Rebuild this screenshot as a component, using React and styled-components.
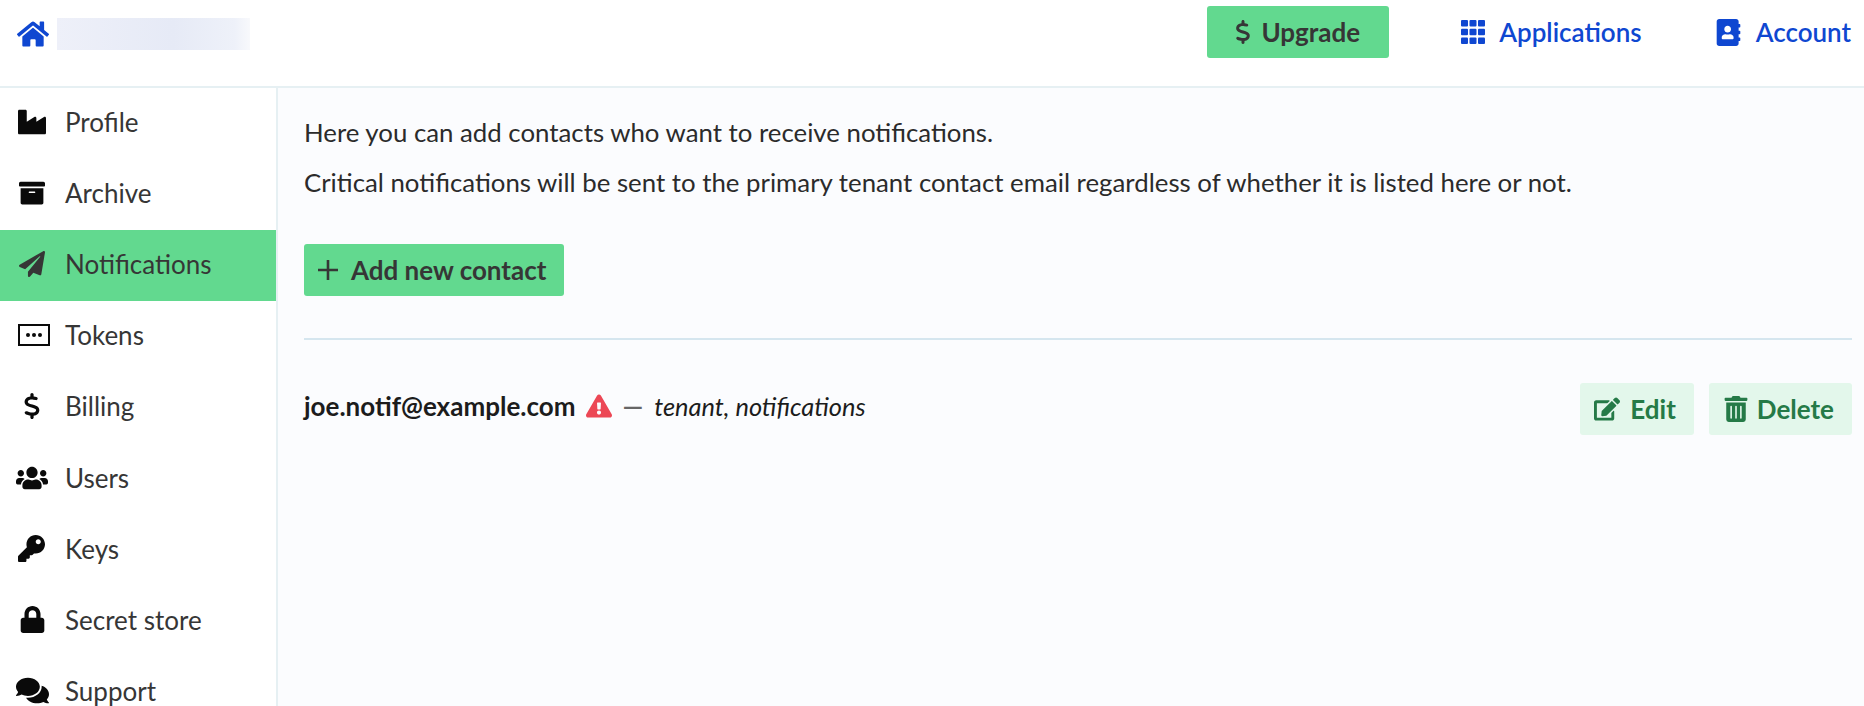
import styled, { createGlobalStyle } from "styled-components";
import {
  FaAddressBook,
  FaArchive,
  FaComments,
  FaEdit,
  FaExclamationTriangle,
  FaHome,
  FaIndustry,
  FaKey,
  FaLock,
  FaPaperPlane,
  FaTrashAlt,
  FaUsers,
} from "react-icons/fa";
import { FaDollarSign } from "react-icons/fa6";

const GlobalStyle = createGlobalStyle`
  html, body {
    margin: 0;
    height: 706px;
    overflow: hidden;
    background: #fff;
    font-family: Lato, "Liberation Sans", sans-serif;
    color: #363636;
  }
`;

const Page = styled.div`
  display: flex;
  flex-direction: column;
  height: 706px;
  overflow: hidden;
`;

const TopBar = styled.header`
  display: flex;
  flex: 0 0 86px;
  align-items: flex-start;
  justify-content: space-between;
  padding-right: 13px;
  background: #fff;
  border-bottom: 2px solid #e6f0f3;
`;

const Brand = styled.div`
  display: flex;
  align-items: center;
  height: 68px;
  padding-left: 17px;
  gap: 8px;
  color: #0f47d1;
`;

const BlurredName = styled.div`
  width: 193px;
  height: 32px;
  background: linear-gradient(90deg, #eef0f9, #e6eaf6 60%, #eef1f9 92%, #f8f9fc);
`;

const TopNav = styled.nav`
  display: flex;
  align-items: center;
  height: 52px;
  margin-top: 6px;
`;

const NavLink = styled.a`
  display: flex;
  align-items: center;
  margin-left: ${(p) => p.$gap}px;
  gap: 14px;
  color: #0f47d1;
  font-size: 26px;
  font-weight: 600;
`;

const GreenButton = styled.button`
  display: inline-flex;
  align-items: center;
  height: 52px;
  padding: 0 ${(p) => p.$right}px 0 ${(p) => p.$left}px;
  gap: ${(p) => p.$gap}px;
  border: 0;
  border-radius: 3px;
  background: #62d98f;
  color: #363636;
  font-family: inherit;
  font-size: 26px;
  font-weight: 700;
`;

const AddButton = styled(GreenButton)`
  margin-top: 27px;
`;

const Body = styled.div`
  display: flex;
  flex: 1;
  min-height: 0;
`;

const Sidebar = styled.aside`
  flex: 0 0 276px;
  border-right: 2px solid #e6f0f3;
  background: #fff;
`;

const MenuItem = styled.div`
  display: flex;
  align-items: center;
  box-sizing: border-box;
  height: 71.1px;
  padding: 0 0 3px 16px;
  background: ${(p) => (p.$active ? "#62d98f" : "transparent")};
  font-size: 26px;
  line-height: 1;
`;

const MenuIcon = styled.span`
  display: flex;
  flex: 0 0 49px;
  align-items: center;
  padding-left: ${(p) => p.$inset}px;
  box-sizing: border-box;
  color: ${(p) => (p.$active ? "#363636" : "#0a0a0a")};
  svg {
    display: block;
  }
`;

const Main = styled.main`
  flex: 1;
  padding: 29px 12px 0 26px;
  background: #fbfcfe;
`;

const Paragraph = styled.p`
  margin: 0 0 20px;
  height: 30px;
  font-size: 25.8px;
  line-height: 30px;
  color: #2b2b2b;
`;

const Divider = styled.hr`
  height: 2px;
  margin: 42px 0 0;
  border: 0;
  background: #d5e6ef;
`;

const ContactRow = styled.div`
  display: flex;
  align-items: center;
  justify-content: space-between;
  margin-top: 43px;
`;

const ContactInfo = styled.div`
  display: flex;
  align-items: center;
  padding-bottom: 6px;
  font-size: 26px;
  color: #1c1c1c;
`;

const Email = styled.strong`
  font-weight: 700;
`;

const Warning = styled(FaExclamationTriangle)`
  margin: 0 10px 0 11px;
  color: #ec4755;
  font-size: 26px;
`;

const Dash = styled.span`
  color: #666;
  font-weight: 700;
`;

const Roles = styled.em`
  margin-left: 11px;
  font-size: 25.4px;
`;

const RowActions = styled.div`
  display: flex;
  gap: 15px;
`;

const LightButton = styled.button`
  display: inline-flex;
  align-items: center;
  height: 52px;
  padding: 0 18px 0 14px;
  gap: ${(p) => p.$gap}px;
  border: 0;
  border-radius: 3px;
  background: #e3f7eb;
  color: #257a47;
  font-family: inherit;
  font-size: 26px;
  font-weight: 700;
`;

const TokenIcon = () => (
  <svg width="32" height="22" viewBox="0 0 32 22">
    <rect x="1" y="1" width="30" height="20" fill="none" stroke="currentColor" strokeWidth="2" />
    <circle cx="10" cy="11" r="2" fill="currentColor" />
    <circle cx="16" cy="11" r="2" fill="currentColor" />
    <circle cx="22" cy="11" r="2" fill="currentColor" />
  </svg>
);

const PlusIcon = () => (
  <svg width="22" height="22" viewBox="0 0 22 22">
    <path d="M11 1v20M1 11h20" stroke="currentColor" strokeWidth="2.6" />
  </svg>
);

const GridIcon = () => (
  <svg width="24" height="24" viewBox="0 0 24 24" fill="currentColor">
    {[0, 8.75, 17.5].map((y) =>
      [0, 8.5, 17].map((x) => <rect key={`${x}-${y}`} x={x} y={y} width="7" height="6.5" rx="1" />)
    )}
  </svg>
);

const menu = [
  { label: "Profile", icon: <FaIndustry size={28} />, inset: 2 },
  { label: "Archive", icon: <FaArchive size={26} />, inset: 3 },
  { label: "Notifications", icon: <FaPaperPlane size={26} />, inset: 3, active: true },
  { label: "Tokens", icon: <TokenIcon />, inset: 2 },
  { label: "Billing", icon: <FaDollarSign size={26} />, inset: 3 },
  { label: "Users", icon: <FaUsers size={32} /> },
  { label: "Keys", icon: <FaKey size={27} />, inset: 2 },
  { label: "Secret store", icon: <FaLock size={27} />, inset: 3 },
  { label: "Support", icon: <FaComments size={33} /> },
];

const App = () => (
  <Page>
    <GlobalStyle />
    <TopBar>
      <Brand>
        <FaHome size={32} />
        <BlurredName />
      </Brand>
      <TopNav>
        <GreenButton $left={24} $right={29} $gap={6}>
          <FaDollarSign size={24} />
          Upgrade
        </GreenButton>
        <NavLink $gap={72}>
          <GridIcon />
          Applications
        </NavLink>
        <NavLink $gap={73}>
          <FaAddressBook size={27} />
          Account
        </NavLink>
      </TopNav>
    </TopBar>
    <Body>
      <Sidebar>
        {menu.map((item) => (
          <MenuItem key={item.label} $active={item.active}>
            <MenuIcon $active={item.active} $inset={item.inset || 0}>{item.icon}</MenuIcon>
            {item.label}
          </MenuItem>
        ))}
      </Sidebar>
      <Main>
        <Paragraph>Here you can add contacts who want to receive notifications.</Paragraph>
        <Paragraph>
          Critical notifications will be sent to the primary tenant contact email regardless of whether it is listed here or not.
        </Paragraph>
        <AddButton $left={13} $right={18} $gap={12}>
          <PlusIcon />
          Add new contact
        </AddButton>
        <Divider />
        <ContactRow>
          <ContactInfo>
            <Email>joe.notif@example.com</Email>
            <Warning />
            <Dash>—</Dash>
            <Roles>tenant, notifications</Roles>
          </ContactInfo>
          <RowActions>
            <LightButton $gap={10}>
              <FaEdit size={26} />
              Edit
            </LightButton>
            <LightButton $gap={8}>
              <FaTrashAlt size={26} />
              Delete
            </LightButton>
          </RowActions>
        </ContactRow>
      </Main>
    </Body>
  </Page>
);

export default App;
